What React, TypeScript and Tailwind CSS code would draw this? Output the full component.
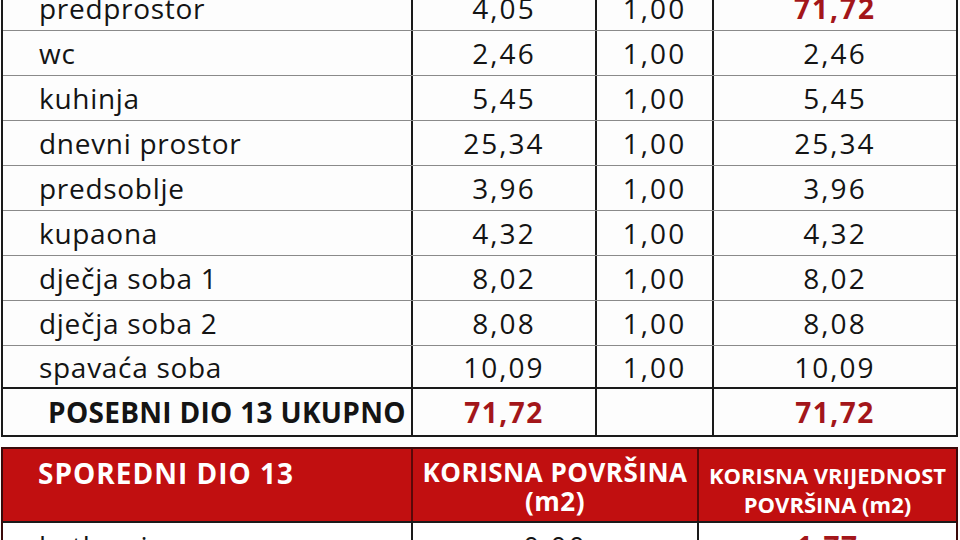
const rows = [
  { name: "predprostor", area: "4,05", k: "1,00", val: "71,72", red: true },
  { name: "wc", area: "2,46", k: "1,00", val: "2,46" },
  { name: "kuhinja", area: "5,45", k: "1,00", val: "5,45" },
  { name: "dnevni prostor", area: "25,34", k: "1,00", val: "25,34" },
  { name: "predsoblje", area: "3,96", k: "1,00", val: "3,96" },
  { name: "kupaona", area: "4,32", k: "1,00", val: "4,32" },
  { name: "dječja soba 1", area: "8,02", k: "1,00", val: "8,02" },
  { name: "dječja soba 2", area: "8,08", k: "1,00", val: "8,08" },
  { name: "spavaća soba", area: "10,09", k: "1,00", val: "10,09" },
];

export default function App() {
  return (
    <div
      className="w-[960px] h-[540px] overflow-hidden bg-[#fdfdfd] text-[#141414]"
      style={{ fontFamily: '"Open Sans", "Noto Sans", sans-serif' }}
    >
      <div className="-mt-[14px] ml-px mr-[2px] border-l-2 border-r-2 border-[#1a1a1a]">
        {rows.map((r, i) => (
          <div
            key={r.name}
            className={`grid grid-cols-[410px_184px_117px_1fr] text-[28px] leading-none ${
              i === rows.length - 1 ? "border-b-2 border-[#1a1a1a] h-[43px]" : "border-b border-[#8a8a8a] h-[45px]"
            }`}
          >
            <div className="flex items-center pl-[36px] tracking-[0.7px] border-r-2 border-[#1a1a1a]">{r.name}</div>
            <div className="flex items-center justify-center tracking-[2px] border-r-2 border-[#1a1a1a]">{r.area}</div>
            <div className="flex items-center justify-center tracking-[2px] border-r-2 border-[#1a1a1a]">{r.k}</div>
            <div
              className={`flex items-center justify-center tracking-[2px] ${
                r.red ? "font-bold text-[#a3161a]" : ""
              }`}
            >
              {r.val}
            </div>
          </div>
        ))}
        <div className="grid grid-cols-[410px_184px_117px_1fr] h-[48px] border-b-2 border-[#1a1a1a] text-[28px] font-bold leading-none">
          <div className="flex items-center pl-[45px] tracking-[0.3px] border-r-2 border-[#1a1a1a]">POSEBNI DIO 13 UKUPNO</div>
          <div className="flex items-center justify-center tracking-[1.5px] border-r-2 border-[#1a1a1a] text-[#a3161a]">71,72</div>
          <div className="border-r-2 border-[#1a1a1a]"></div>
          <div className="flex items-center justify-center tracking-[1.5px] text-[#a3161a]">71,72</div>
        </div>
      </div>

      <div className="mt-[10px] ml-px mr-[2px] border-2 border-b-0 border-[#3a0a0a]">
        <div className="grid grid-cols-[410px_286px_1fr] h-[74px] bg-[#c10f10] text-white font-bold border-b-2 border-[#1a1a1a]">
          <div className="pl-[35px] pt-[9px] text-[28px] leading-[30px] tracking-[1px] border-r-2 border-[#5a0808]">SPOREDNI DIO 13</div>
          <div className="pt-[9px] text-[26px] leading-[29px] tracking-[0.5px] text-center border-r-2 border-[#5a0808]">
            KORISNA POVRŠINA
            <br />
            (m2)
          </div>
          <div className="pt-[12px] text-[22px] leading-[29px] text-center">
            KORISNA VRIJEDNOST
            <br />
            POVRŠINA (m2)
          </div>
        </div>
        <div className="grid grid-cols-[410px_286px_1fr] h-[45px] text-[28px] leading-none bg-white">
          <div className="flex items-center pl-[36px] tracking-[0.7px] border-r-2 border-[#1a1a1a]">kotlovnica</div>
          <div className="flex items-center justify-center tracking-[2px] border-r-2 border-[#1a1a1a]">0,00</div>
          <div className="flex items-center justify-center tracking-[1.5px] font-bold text-[#a3161a]">1,77</div>
        </div>
      </div>
    </div>
  );
}
